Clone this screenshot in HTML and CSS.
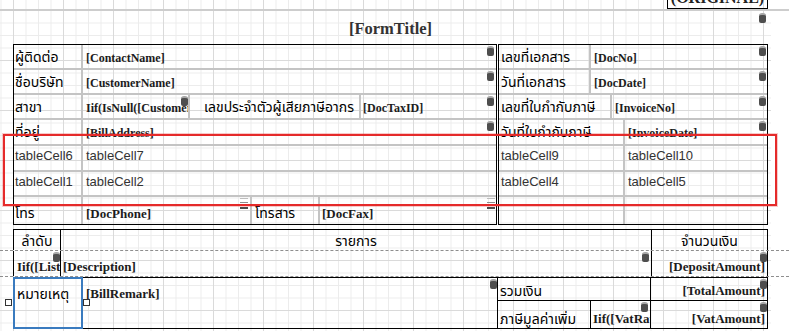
FILE: index.html
```html
<!DOCTYPE html>
<html lang="th">
<head>
  <meta charset="UTF-8">
  <title>Report Designer</title>
  <link rel="stylesheet" href="styles.css">
</head>
<body>

  <div class="page">

    <div class="band-top">
      <div class="original">(ORIGINAL)</div>
    </div>

    <div class="band-title">
      <div class="title">[FormTitle]</div>
      <span class="bind"></span>
    </div>

    <div class="info">
      <div class="tbl tbl-left">
        <div class="row h25"><div class="c k lbl">ผู้ติดต่อ</div><div class="c v fld">[ContactName]</div><span class="bind"></span></div>
        <div class="row h25"><div class="c k lbl">ชื่อบริษัท</div><div class="c v fld">[CustomerName]</div><span class="bind"></span></div>
        <div class="row h25">
          <div class="c k lbl">สาขา</div>
          <div class="c w-iif fld">Iif(IsNull([CustomerBranch]),'',[CustomerBranch])<span class="bind"></span></div>
          <div class="c w-tax lbl">เลขประจำตัวผู้เสียภาษีอากร</div>
          <div class="c v fld">[DocTaxID]</div>
          <span class="bind"></span>
        </div>
        <div class="row h26"><div class="c k lbl">ที่อยู่</div><div class="c v fld">[BillAddress]</div><span class="bind"></span></div>
        <div class="row h26 tc"><div class="c k cell">tableCell6</div><div class="c v cell">tableCell7</div></div>
        <div class="row h25 tc"><div class="c k cell">tableCell1</div><div class="c v cell">tableCell2</div></div>
        <div class="row last phone">
          <div class="c k lbl">โทร</div>
          <div class="c w-phone fld">[DocPhone]<span class="grip"></span></div>
          <div class="c w-fax lbl">โทรสาร</div>
          <div class="c v fld">[DocFax]</div>
          <span class="grip"></span>
        </div>
      </div>

      <div class="tbl tbl-right">
        <div class="row h25"><div class="c k-doc lbl">เลขที่เอกสาร</div><div class="c v fld">[DocNo]</div><span class="bind"></span></div>
        <div class="row h25"><div class="c k-doc lbl">วันที่เอกสาร</div><div class="c v fld">[DocDate]</div><span class="bind"></span></div>
        <div class="row h25"><div class="c k-inv lbl">เลขที่ใบกำกับภาษี</div><div class="c v fld">[InvoiceNo]</div><span class="bind"></span></div>
        <div class="row h26"><div class="c k-date lbl">วันที่ใบกำกับภาษี</div><div class="c v fld">[InvoiceDate]</div><span class="bind"></span></div>
        <div class="row h26 tc"><div class="c k-date cell">tableCell9</div><div class="c v cell">tableCell10</div></div>
        <div class="row h25 tc"><div class="c k-date cell">tableCell4</div><div class="c v cell">tableCell5</div></div>
        <div class="row last"><div class="c k-date"></div><div class="c v"></div></div>
      </div>

      <div class="selection"></div>
    </div>

    <div class="head">
      <div class="c col-no lbl">ลำดับ</div>
      <div class="c col-desc lbl">รายการ</div>
      <div class="c col-amt lbl">จำนวนเงิน</div>
    </div>
    <div class="dash"></div>

    <div class="detail">
      <div class="c col-no fld">Iif([ListNo]<span class="bind"></span></div>
      <div class="c col-desc fld">[Description]<span class="bind"></span></div>
      <div class="c col-amt fld num">[DepositAmount]<span class="bind"></span></div>
    </div>
    <div class="dash"></div>

    <div class="foot">
      <div class="remark">
        <div class="note lbl">หมายเหตุ</div>
        <div class="fld remark-text">[BillRemark]</div>
        <span class="handle h-left"></span>
        <span class="handle h-right"></span>
        <span class="bind"></span>
      </div>
      <div class="sums">
        <div class="sum-row sum-total">
          <div class="c s-lbl lbl">รวมเงิน</div>
          <div class="c s-amt fld num">[TotalAmount]<span class="bind"></span></div>
        </div>
        <div class="sum-row sum-vat">
          <div class="c s-vat lbl">ภาษีมูลค่าเพิ่ม</div>
          <div class="c s-rate fld">Iif([VatRate]<span class="bind"></span></div>
          <div class="c s-amt fld num">[VatAmount]<span class="bind"></span></div>
        </div>
      </div>
    </div>

  </div>

</body>
</html>
```

FILE: styles.css
```css
* {
  margin: 0;
  padding: 0;
  box-sizing: border-box;
}

body {
  background-color: #fff;
  color: #000;
  line-height: 16px;
  font-family: 'Liberation Sans', Arial, sans-serif;
}

/* design surface with the snap grid */
.page {
  width: 789px;
  height: 331px;
  overflow: hidden;
  background:
    linear-gradient(to right, transparent 771px, #fff 771px),
    linear-gradient(to right, #dadada 1px, transparent 1px) 13px 0 / 50px 100%,
    linear-gradient(to bottom, #dadada 1px, transparent 1px) 0 10px / 100% 50px,
    linear-gradient(to right, #ececec 1px, transparent 1px) 0.5px 0 / 12.5px 100%,
    linear-gradient(to bottom, #ececec 1px, transparent 1px) 0 10px / 100% 12.5px;
  background-color: #fff;
}

/* text styles */
.lbl {
  font-family: 'Noto Sans Thai', Loma, Tahoma, 'DejaVu Sans', sans-serif;
  font-size: 14px;
  color: #000;
}

.fld {
  font-family: 'Liberation Serif', 'Times New Roman', serif;
  font-weight: bold;
  font-size: 12px;
  color: #1c1c1c;
}

.cell {
  font-family: 'Liberation Sans', Arial, sans-serif;
  font-size: 13px;
  color: #333;
}

/* top band */
.band-top {
  height: 11px;
  border-bottom: 2px solid #cdcdcd;
  display: flex;
  justify-content: flex-end;
  padding-right: 21px;
}

.original {
  width: 101px;
  height: 26px;
  margin-top: -17px;
  padding-bottom: 3px;
  border: 1px solid #000;
  display: flex;
  align-items: flex-end;
  justify-content: center;
  font-family: 'Liberation Serif', serif;
  font-weight: bold;
  font-size: 16px;
  line-height: 14px;
  color: #222;
}

.band-title {
  position: relative;
  margin-left: 13px;
  width: 755px;
  height: 33px;
  display: flex;
  justify-content: center;
  align-items: center;
  padding-top: 3px;
}

.title {
  font-family: 'Liberation Serif', serif;
  font-weight: bold;
  font-size: 16.5px;
  color: #333;
}

/* header info tables */
.info {
  position: relative;
  display: flex;
  gap: 1px;
  margin-left: 13px;
}

.tbl {
  border: 1px solid #000;
}

.tbl-left {
  width: 484px;
}

.tbl-right {
  width: 270px;
}

.row {
  position: relative;
  display: flex;
  border-bottom: 2px solid #c4c4c4;
}

.row.h25 { height: 25px; }
.row.h26 { height: 26px; }
.row.last {
  height: 27px;
  border-bottom: none;
}

.c {
  position: relative;
  display: flex;
  align-items: center;
  padding-top: 2px;
  white-space: nowrap;
  overflow: hidden;
}

.c.lbl {
  overflow: visible;
}

.row .c {
  border-right: 2px solid #c4c4c4;
}

.row .c.v {
  flex: 1;
  border-right: none;
  padding-left: 3px;
}

.k { width: 69px; padding-left: 1px; }
.w-iif { width: 107px; padding-left: 3px; }
.w-tax { width: 171px; padding-left: 14px; }
.row .w-tax + .v { padding-left: 2px; }
.w-phone { width: 169px; padding-left: 3px; }
.w-fax { width: 68px; padding-left: 3px; }
.row .w-fax + .v { padding-left: 2px; }

.k-doc { width: 92px; padding-left: 2px; }
.k-inv { width: 113px; padding-left: 2px; }
.k-date { width: 126px; padding-left: 2px; }

.row.tc .c {
  align-items: flex-start;
  padding-top: 2px;
}

.phone .c {
  padding-top: 7px;
}

.phone .fld {
  font-size: 13px;
}

/* selected table outline */
.selection {
  position: absolute;
  left: -10px;
  top: 90px;
  width: 774px;
  height: 72px;
  border: 2px solid #e52a2a;
  box-shadow: 0 0 0 1px rgba(229, 42, 42, 0.25);
}

/* data binding marker */
.bind {
  position: absolute;
  top: 1px;
  right: 2px;
  width: 7px;
  height: 10px;
  background-color: #4e4e4e;
  border-top: 2px solid #a6a6a6;
  border-radius: 3px 3px 2px 2px;
}

.band-title .bind {
  top: 2px;
  right: 2px;
}

.tbl-right .bind {
  right: 1px;
}

.w-iif .bind {
  right: 0;
}

/* collapsed row grip */
.grip {
  position: absolute;
  top: 1px;
  right: 2px;
  width: 8px;
  height: 13px;
  background:
    linear-gradient(#bdbdbd, #bdbdbd) 0 0 / 8px 1px no-repeat,
    linear-gradient(#8c8c8c, #8c8c8c) 0 4px / 8px 1px no-repeat,
    linear-gradient(#4a4a4a, #4a4a4a) 0 9px / 8px 2px no-repeat;
}

.row > .grip {
  right: 1px;
}

/* page header / detail */
.head,
.detail {
  display: flex;
  margin-left: 13px;
  width: 755px;
  border-left: 1px solid #000;
  border-right: 1px solid #000;
}

.head {
  margin-top: 4px;
  height: 21px;
  border-top: 1px solid #000;
}

.head .c {
  justify-content: center;
  padding-top: 4px;
}

.detail {
  height: 25px;
}

.detail .c {
  align-items: flex-end;
  padding-bottom: 1px;
  font-size: 13px;
}

.col-no {
  width: 47px;
  border-right: 1px solid #000;
}

.col-desc {
  width: 591px;
  border-right: 1px solid #000;
}

.col-amt {
  flex: 1;
}

.detail .col-no {
  padding-left: 3px;
}

.detail .col-desc {
  padding-left: 2px;
}

.detail .col-no .bind {
  right: 0;
}

.detail .col-amt .bind,
.s-amt .bind {
  right: 0;
}

.num {
  justify-content: flex-end;
  padding-right: 2px;
}

.dash {
  width: 789px;
  height: 1px;
  border-top: 1px dashed #8e8e8e;
}

/* report footer */
.foot {
  display: flex;
  margin-left: 13px;
  width: 755px;
  height: 52px;
  border-top: 1px solid #000;
  border-bottom: 1px solid #000;
}

.remark {
  position: relative;
  width: 485px;
  display: flex;
  border-left: 1px solid #000;
  border-right: 1px solid #000;
}

.note {
  position: relative;
  width: 69px;
  padding: 9px 0 0 3px;
}

.note::after {
  content: "";
  position: absolute;
  top: -1px;
  left: -1px;
  right: 0;
  bottom: -1px;
  border: 2px solid #3a7bbf;
}

.remark-text {
  padding: 8px 0 0 3px;
  font-size: 13px;
}

.remark .bind {
  right: 0;
}

.handle {
  position: absolute;
  top: 21px;
  width: 7px;
  height: 7px;
  background-color: #fff;
  border: 1px solid #333;
}

.h-left { left: -9px; }
.h-right { left: 69px; }

.sums {
  flex: 1;
  border-right: 1px solid #000;
}

.sum-row {
  display: flex;
}

.sum-total {
  height: 23px;
  border-bottom: 1px solid #000;
}

.sum-vat {
  height: 27px;
}

.sum-row .c {
  align-items: flex-end;
  padding-bottom: 1px;
  font-size: 13px;
}

.sum-row .lbl {
  font-size: 14px;
  padding-left: 2px;
  padding-bottom: 0;
}

.s-lbl {
  width: 153px;
  border-right: 1px solid #000;
}

.s-vat {
  width: 93px;
  border-right: 1px solid #000;
}

.s-rate {
  width: 60px;
  padding-left: 2px;
  border-right: 1px solid #000;
}

.s-amt {
  flex: 1;
}
```
